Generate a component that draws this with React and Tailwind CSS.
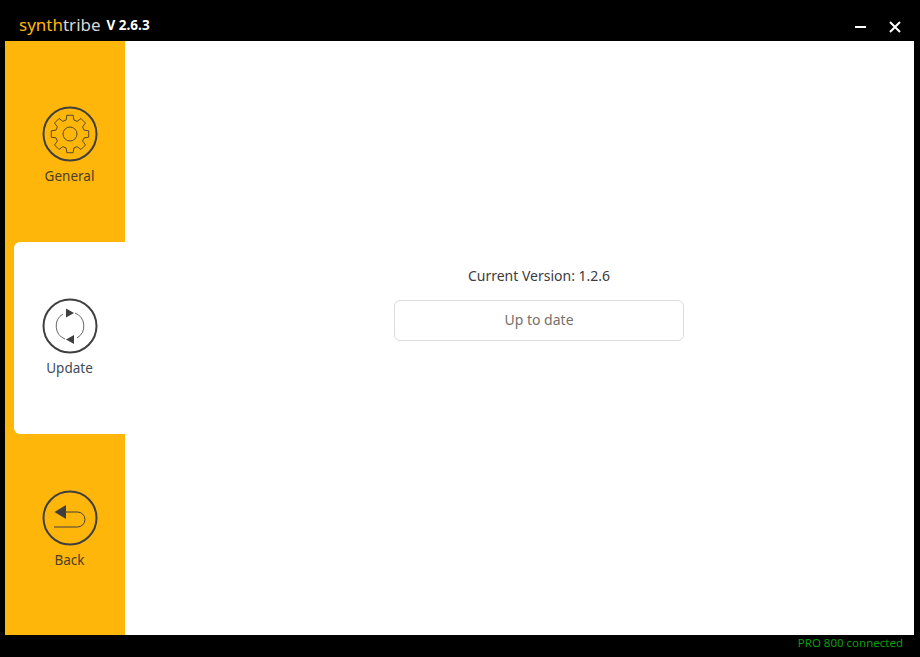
import React from 'react';

const font = { fontFamily: '"Noto Sans", "Open Sans", sans-serif' };

// 8 tooth gear outline, centre 28,28
function gearPath() {
  const teeth = 8;
  const rOut = 19;
  const rIn = 14.5;
  let d = '';
  for (let i = 0; i < teeth; i++) {
    const a = (i * Math.PI * 2) / teeth - Math.PI / 2;
    const pts = [
      [rIn, a - 0.27],
      [rOut, a - 0.17],
      [rOut, a + 0.17],
      [rIn, a + 0.27],
    ];
    pts.forEach(([r, t], j) => {
      const x = (28 + r * Math.cos(t)).toFixed(2);
      const y = (28 + r * Math.sin(t)).toFixed(2);
      d += `${i === 0 && j === 0 ? 'M' : 'L'}${x} ${y} `;
    });
  }
  return d + 'Z';
}

function Ring({ children }) {
  return (
    <svg width="56" height="56" viewBox="0 0 56 56" fill="none" className="block">
      <circle cx="28" cy="28" r="26.5" stroke="#3f3f3f" strokeWidth="2" />
      {children}
    </svg>
  );
}

function GearIcon() {
  return (
    <Ring>
      <path d={gearPath()} stroke="#5a4a20" strokeWidth="1" strokeLinejoin="round" />
      <circle cx="28" cy="28" r="7" stroke="#5a4a20" strokeWidth="1" />
    </Ring>
  );
}

function UpdateIcon() {
  return (
    <Ring>
      <path d="M33 15A14 14 0 0 1 35 40" stroke="#666" strokeWidth="1" />
      <path d="M23 41A14 14 0 0 1 21 16" stroke="#666" strokeWidth="1" />
      <path d="M24 10.5L32 15L24 19.5Z" fill="#3f3f3f" />
      <path d="M32 37L24 41.5L32 46Z" fill="#3f3f3f" />
    </Ring>
  );
}

function BackIcon() {
  return (
    <Ring>
      <path d="M12 37H35.5A7.5 7.5 0 0 0 35.5 22H23" stroke="#3f3f3f" strokeWidth="1" />
      <path d="M24 15V29L12.5 22Z" fill="#3f3f3f" />
    </Ring>
  );
}

function NavItem({ icon, label, active }) {
  return (
    <div
      className={`h-[192px] ml-[9px] flex flex-col items-center pt-[56px] ${
        active ? 'bg-white rounded-l-md text-[#404b5c]' : 'text-[#4a4028]'
      }`}
    >
      {icon}
      <span className="text-[13.5px] leading-[20px] mt-[4px]">{label}</span>
    </div>
  );
}

export default function App() {
  return (
    <div className="w-[920px] h-[657px] bg-black flex flex-col overflow-hidden" style={font}>
      {/* Title bar */}
      <div className="h-[41px] flex items-start justify-between shrink-0">
        <div className="flex items-baseline pl-[19px] pt-[13px] leading-[24px]">
          <span className="text-[17px] text-[#ffb60a]">synth</span>
          <span className="text-[17px] text-[#d8d8d8]">tribe</span>
          <span className="text-[13.5px] font-bold text-white ml-[6px] relative top-[-1px]">V 2.6.3</span>
        </div>
        <div className="flex items-center gap-[23px] pr-[19px] pt-[21px]">
          <div className="w-[11px] h-[2px] bg-white" />
          <svg width="12" height="12" viewBox="0 0 12 12" stroke="white" strokeWidth="2" className="block">
            <path d="M1 1L11 11M11 1L1 11" />
          </svg>
        </div>
      </div>

      {/* Window body */}
      <div className="h-[594px] mr-[6px] ml-[5px] flex shrink-0 bg-white">
        <aside className="w-[120px] bg-[#ffb60a] pt-[9px] shrink-0">
          <NavItem icon={<GearIcon />} label="General" />
          <NavItem icon={<UpdateIcon />} label="Update" active />
          <NavItem icon={<BackIcon />} label="Back" />
        </aside>
        <main className="flex-1 flex flex-col items-center pt-[224px] pl-[39px]">
          <p className="text-sm leading-[22px] text-[#3c3c3c]">Current Version: 1.2.6</p>
          <div className="mt-[13px] w-[290px] h-[41px] pb-[2px] border border-[#dcdcdc] rounded-md flex items-center justify-center text-sm text-[#77706a]">
            Up to date
          </div>
        </main>
      </div>

      {/* Status bar */}
      <div className="flex-1 flex justify-end pr-[17px] text-[11.5px] leading-[16px] text-[#0c9c0c]">
        PRO 800 connected
      </div>
    </div>
  );
}
